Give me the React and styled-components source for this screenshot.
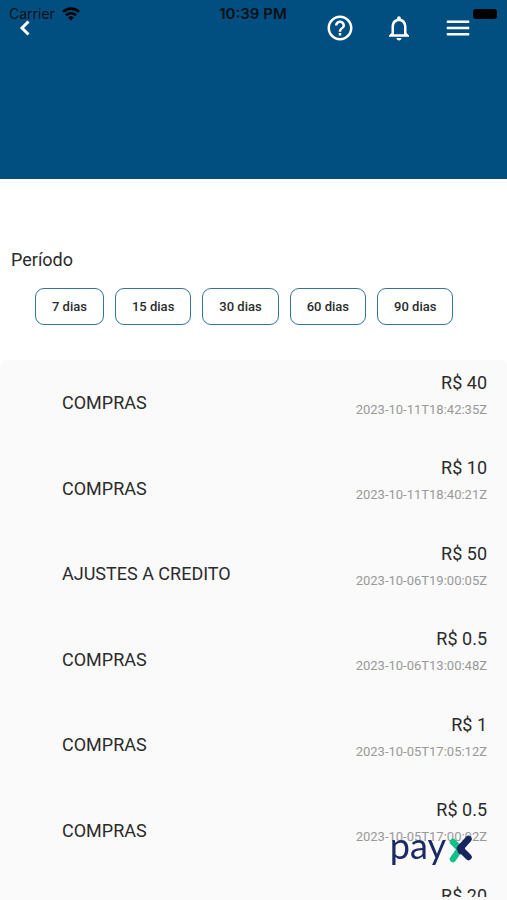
import React, { useState } from "react";
import styled, { createGlobalStyle } from "styled-components";
import { MdHelpOutline, MdNotificationsNone, MdMenu } from "react-icons/md";

const GlobalStyle = createGlobalStyle`
  * {
    box-sizing: border-box;
  }
  body {
    margin: 0;
    background-color: #fff;
    color: #2b2b2b;
    font-family: Roboto, "Liberation Sans", sans-serif;
  }
`;

const Screen = styled("div")`
  display: flex;
  flex-direction: column;
  height: 100vh;
  overflow: hidden;
`;

const Header = styled("header")`
  position: relative;
  flex: none;
  height: 179px;
  background-color: #004f80;
`;

const StatusBar = styled("div")`
  position: absolute;
  top: 0;
  left: 0;
  right: 0;
  display: grid;
  grid-template-columns: 1fr auto 1fr;
  align-items: center;
  height: 27px;
  padding: 0 10px 0 9px;
  color: #0a1016;
  font-family: Inter, sans-serif;
  font-size: 14px;
  pointer-events: none;
`;

const Carrier = styled("span")`
  display: flex;
  align-items: center;
  gap: 7px;
`;

const Clock = styled("span")`
  font-size: 15px;
  font-weight: 600;
`;

const Battery = styled("span")`
  justify-self: end;
  width: 24px;
  height: 10px;
  border-radius: 3px;
  background-color: #000;
`;

const NavBar = styled("nav")`
  display: flex;
  align-items: center;
  justify-content: space-between;
  height: 56px;
  padding: 0 34px 0 10px;
`;

const NavActions = styled("div")`
  display: flex;
  gap: 29px;
`;

const IconButton = styled("button")`
  display: flex;
  align-items: center;
  justify-content: center;
  width: 30px;
  height: 30px;
  padding: 0;
  border: 0;
  background: none;
  color: #fff;
  font-size: 30px;
`;

const Period = styled("section")`
  flex: none;
  padding: 70px 11px 35px;
`;

const PeriodTitle = styled("h2")`
  margin: 0 0 17px;
  font-size: 18px;
  font-weight: 400;
  line-height: 22px;
`;

const PeriodList = styled("div")`
  display: flex;
  gap: 11px;
  padding-left: 24px;
`;

const PeriodButton = styled("button")`
  height: 37px;
  padding: 0 16px;
  border: 1px solid #33739c;
  border-radius: 9px;
  background-color: #fff;
  color: #2b2b2b;
  font-family: inherit;
  font-size: 13px;
  font-weight: 500;
`;

const Statement = styled("ul")`
  flex: 1;
  min-height: 0;
  display: grid;
  grid-auto-rows: 85px 86px;
  margin: 0;
  padding: 0 20px 0 62px;
  border-bottom: 3px solid #fafafa;
  border-radius: 8px 8px 0 0;
  background-color: #fafafa;
  list-style: none;
  overflow: hidden;
`;

const Item = styled("li")`
  display: flex;
  align-items: center;
  justify-content: space-between;
`;

const ItemName = styled("span")`
  font-size: 18px;
`;

const ItemInfo = styled("div")`
  align-self: flex-start;
  padding-top: 11px;
  text-align: right;
`;

const Amount = styled("div")`
  font-size: 18px;
  line-height: 24px;
`;

const DateText = styled("time")`
  display: block;
  padding-top: 5px;
  color: #999;
  font-size: 13px;
  line-height: 20px;
`;

const Brand = styled("div")`
  position: fixed;
  right: 34px;
  bottom: 35px;
  display: flex;
  align-items: flex-start;
  gap: 3px;
  color: #1b2a66;
  font-family: Lato, sans-serif;
  font-size: 36px;
  line-height: 20px;
`;

const periods = [7, 15, 30, 60, 90];

const items = [
  { id: 0, name: "COMPRAS", amount: "40", date: "2023-10-11T18:42:35Z" },
  { id: 1, name: "COMPRAS", amount: "10", date: "2023-10-11T18:40:21Z" },
  { id: 2, name: "AJUSTES A CREDITO", amount: "50", date: "2023-10-06T19:00:05Z" },
  { id: 3, name: "COMPRAS", amount: "0.5", date: "2023-10-06T13:00:48Z" },
  { id: 4, name: "COMPRAS", amount: "1", date: "2023-10-05T17:05:12Z" },
  { id: 5, name: "COMPRAS", amount: "0.5", date: "2023-10-05T17:00:02Z" },
  { id: 6, name: "", amount: "20", date: "" }
];

const BackIcon = () => (
  <svg width="12" height="16" viewBox="0 0 12 16" fill="none" stroke="#fff" strokeWidth="3">
    <path d="M9.5 1.5L3 8l6.5 6.5" />
  </svg>
);

const WifiIcon = () => (
  <svg width="18" height="14" viewBox="0 0 18 14" fill="none" stroke="#000" strokeWidth="2.6">
    <path d="M1 4.8a11.6 11.6 0 0 1 16 0" />
    <path d="M4 8.2a7.2 7.2 0 0 1 10 0" />
    <path d="M9 13.4L6.2 10.6a4 4 0 0 1 5.6 0z" fill="#000" stroke="none" />
  </svg>
);

const BrandMark = () => (
  <svg width="24" height="30" viewBox="0 0 24 30" fill="none" strokeWidth="6.5" strokeLinecap="round" strokeLinejoin="round">
    <path d="M4 7L11 14L4 24" stroke="#12c08a" />
    <path d="M19.5 4L11 13.5L19.5 22" stroke="#17265f" />
    <path d="M13 11L12 16" stroke="#17265f" />
  </svg>
);

const App = () => {
  const [selected, setSelected] = useState(null);

  const onPeriodClicked = value => () => {
    setSelected(value);
  };

  return (
    <Screen>
      <GlobalStyle />
      <Header>
        <NavBar>
          <IconButton aria-label="Voltar">
            <BackIcon />
          </IconButton>
          <NavActions>
            <IconButton aria-label="Ajuda">
              <MdHelpOutline />
            </IconButton>
            <IconButton aria-label="Notificações">
              <MdNotificationsNone />
            </IconButton>
            <IconButton aria-label="Menu">
              <MdMenu />
            </IconButton>
          </NavActions>
        </NavBar>
        <StatusBar>
          <Carrier>
            Carrier
            <WifiIcon />
          </Carrier>
          <Clock>10:39 PM</Clock>
          <Battery />
        </StatusBar>
      </Header>
      <Period>
        <PeriodTitle>Período</PeriodTitle>
        <PeriodList>
          {periods.map(days => (
            <PeriodButton key={days} onClick={onPeriodClicked(days)} aria-pressed={selected === days}>
              {days} dias
            </PeriodButton>
          ))}
        </PeriodList>
      </Period>
      <Statement>
        {items.map(item => (
          <Item key={item.id}>
            <ItemName>{item.name}</ItemName>
            <ItemInfo>
              <Amount>R$ {item.amount}</Amount>
              <DateText>{item.date}</DateText>
            </ItemInfo>
          </Item>
        ))}
      </Statement>
      <Brand>
        pay
        <BrandMark />
      </Brand>
    </Screen>
  );
};

export default App;
